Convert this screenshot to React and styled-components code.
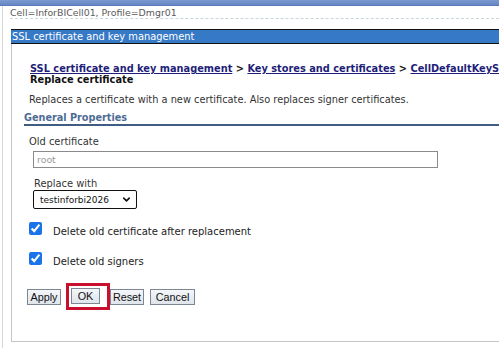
import styled, { createGlobalStyle } from "styled-components";
import { ChevronDown } from "lucide-react";

const GlobalStyle = createGlobalStyle`
  html, body {
    margin: 0;
    padding: 0;
    background: #ffffff;
    font-family: "DejaVu Sans", Verdana, sans-serif;
  }
`;

const Page = styled.div`
  display: flex;
  flex-direction: column;
  height: 348px;
  overflow: hidden;
`;

const TopStrip = styled.div`
  height: 6px;
  flex-shrink: 0;
  background: linear-gradient(#7b9ad0, #6587c4);
  border-bottom: 1px solid #5a7cb9;
  box-sizing: border-box;
`;

const Body = styled.div`
  display: flex;
  flex: 1;
  min-height: 0;
`;

const Gutter = styled.div`
  width: 8px;
  margin-left: 2px;
  border-left: 1px solid #d8d8d8;
  flex-shrink: 0;
`;

const Main = styled.div`
  flex: 1;
  min-width: 0;
  display: flex;
  flex-direction: column;
`;

const CellLine = styled.div`
  height: 11px;
  padding-top: 1px;
  font-size: 9.4px;
  line-height: 11px;
  color: #5a5a5a;
  white-space: nowrap;
  margin-left: -1px;
  border-bottom: 1px dashed #c9d6de;
`;

const TitleBar = styled.div`
  margin-top: 10px;
  height: 13px;
  border-top: 1px solid #111;
  border-bottom: 1px solid #111;
  background: #3679c6;
  color: #ffffff;
  font-size: 9.9px;
  line-height: 13px;
  padding-left: 1px;
  white-space: nowrap;
`;

const Panel = styled.div`
  flex: 1;
  margin-bottom: 6px;
  border-left: 1px solid #c4c4c4;
  border-bottom: 1px solid #c4c4c4;
  padding-left: 17px;
  overflow: hidden;
  display: flex;
  flex-direction: column;
  align-items: flex-start;
`;

const Breadcrumb = styled.div`
  margin-top: 19px;
  margin-left: 1px;
  font-size: 9.8px;
  font-weight: bold;
  line-height: 11px;
  white-space: nowrap;
  color: #222;
`;

const Crumb = styled.a`
  color: #1f1f7a;
  text-decoration: underline;
`;

const PageTitle = styled.div`
  margin-left: 1px;
  font-size: 9.8px;
  font-weight: bold;
  line-height: 11px;
  color: #111;
`;

const Description = styled.div`
  margin-top: 9px;
  font-size: 9.8px;
  line-height: 12px;
  color: #333;
  white-space: nowrap;
`;

const SectionHeader = styled.div`
  align-self: stretch;
  margin-top: 6px;
  margin-left: -5px;
  padding-bottom: 1px;
  border-bottom: 2px solid #3f5c82;
  font-size: 9.7px;
  font-weight: bold;
  line-height: 11px;
  color: #4d6c94;
`;

const FieldLabel = styled.div`
  margin-top: ${({ $top }) => $top}px;
  margin-left: ${({ $left }) => $left}px;
  font-size: 9.9px;
  line-height: 11px;
  color: #333;
`;

const TextInput = styled.div`
  margin-top: 4px;
  margin-left: 4px;
  width: 405px;
  height: 17px;
  box-sizing: border-box;
  border: 1px solid #8a8a8a;
  padding-left: 3px;
  font-size: 9.4px;
  line-height: 15px;
  color: #9a9a9a;
`;

const SelectBox = styled.div`
  margin-top: 1px;
  margin-left: 4px;
  width: 104px;
  height: 19px;
  box-sizing: border-box;
  border: 1px solid #111;
  border-radius: 2px;
  display: flex;
  align-items: center;
  justify-content: space-between;
  padding: 0 4px 0 6px;
  font-size: 9px;
  color: #111;
`;

const CheckRow = styled.label`
  margin-top: ${({ $top }) => $top}px;
  display: flex;
  align-items: flex-start;
  gap: 11px;
`;

const Check = styled.input`
  width: 13px;
  height: 13px;
  margin: 0;
  accent-color: #1a73e8;
`;

const CheckText = styled.span`
  margin-top: 4px;
  font-size: 10px;
  line-height: 11px;
  color: #222;
`;

const ButtonRow = styled.div`
  margin-top: 16px;
  margin-left: -2px;
  display: flex;
  align-items: center;
`;

const Button = styled.button`
  width: ${({ $w }) => $w}px;
  height: 16px;
  margin-left: ${({ $gap }) => $gap || 0}px;
  padding: 0;
  box-sizing: border-box;
  border: 1px solid #7d8794;
  border-radius: 0;
  background: linear-gradient(#f4f6f9, #dfe5ec);
  font-family: "Liberation Sans", Arial, sans-serif;
  font-size: 10.8px;
  line-height: 14px;
  color: #111;
  cursor: pointer;
`;

const Highlight = styled.div`
  margin-left: 5px;
  padding: 2px 7px 3px 2px;
  border: 3px solid #c8102e;
  display: flex;
`;

export default function App() {
  return (
    <Page>
      <GlobalStyle />
      <TopStrip />
      <Body>
        <Gutter />
        <Main>
          <CellLine>Cell=InforBICell01, Profile=Dmgr01</CellLine>
          <TitleBar>SSL certificate and key management</TitleBar>
          <Panel>
            <Breadcrumb>
              <Crumb>SSL certificate and key management</Crumb> &gt;{" "}
              <Crumb>Key stores and certificates</Crumb> &gt;{" "}
              <Crumb>CellDefaultKeyStore</Crumb>
            </Breadcrumb>
            <PageTitle>Replace certificate</PageTitle>
            <Description>
              Replaces a certificate with a new certificate. Also replaces signer certificates.
            </Description>
            <SectionHeader>General Properties</SectionHeader>
            <FieldLabel $top={10} $left={0}>Old certificate</FieldLabel>
            <TextInput>root</TextInput>
            <FieldLabel $top={10} $left={5}>Replace with</FieldLabel>
            <SelectBox>
              <span>testinforbi2026</span>
              <ChevronDown size={11} strokeWidth={3.5} />
            </SelectBox>
            <CheckRow $top={13}>
              <Check type="checkbox" defaultChecked />
              <CheckText>Delete old certificate after replacement</CheckText>
            </CheckRow>
            <CheckRow $top={15}>
              <Check type="checkbox" defaultChecked />
              <CheckText>Delete old signers</CheckText>
            </CheckRow>
            <ButtonRow>
              <Button $w={34}>Apply</Button>
              <Highlight>
                <Button $w={29}>OK</Button>
              </Highlight>
              <Button $w={34}>Reset</Button>
              <Button $w={45} $gap={6}>Cancel</Button>
            </ButtonRow>
          </Panel>
        </Main>
      </Body>
    </Page>
  );
}
